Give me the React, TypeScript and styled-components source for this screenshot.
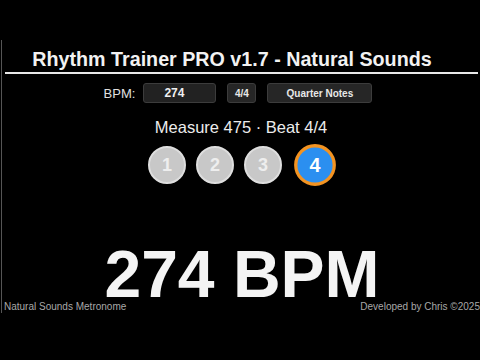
import React from "react";
import styled, { createGlobalStyle } from "styled-components";

const GlobalStyle = createGlobalStyle`
  html, body {
    margin: 0;
    padding: 0;
    background: #000;
    width: 480px;
    height: 360px;
    overflow: hidden;
    font-family: "Liberation Sans", Arial, sans-serif;
  }
`;

const Page = styled.div`
  width: 480px;
  height: 360px;
  padding-top: 40px;
  box-sizing: border-box;
`;

const Frame = styled.div`
  border-left: 1px solid #555;
  margin-left: 1px;
  display: flex;
  flex-direction: column;

  & > * {
    flex-shrink: 0;
  }
`;

const Title = styled.h1`
  margin: 0;
  padding: 8px 18px 0 0;
  font-size: 19.7px;
  font-weight: 700;
  color: #f2f2f2;
  text-align: center;
  line-height: 22px;
`;

const Rule = styled.div`
  margin: 2px 2px 0 3px;
  height: 2px;
  background: #e8e8e8;
`;

const Controls = styled.div`
  display: flex;
  align-items: center;
  justify-content: center;
  padding: 9px 0 0 0;
  margin-left: -6px;
  gap: 11px;
`;

const Label = styled.span`
  font-size: 13px;
  color: #e0e0e0;
  margin-right: -3px;
`;

const Field = styled.div`
  width: 73px;
  height: 20px;
  box-sizing: border-box;
  background: #222;
  border: 1px solid #3c3c3c;
  border-radius: 3px;
  color: #f0f0f0;
  font-size: 12px;
  font-weight: 700;
  display: flex;
  align-items: center;
  padding-left: 20px;
`;

const Button = styled.div<{ $width: number }>`
  width: ${({ $width }) => $width}px;
  height: 20px;
  box-sizing: border-box;
  background: #262626;
  border: 1px solid #3c3c3c;
  border-radius: 3px;
  color: #e8e8e8;
  font-size: 10px;
  font-weight: 700;
  display: flex;
  align-items: center;
  justify-content: center;
`;

const Status = styled.div`
  margin-top: 14px;
  text-align: center;
  font-size: 16.5px;
  color: #ececec;
  line-height: 20px;
`;

const Beats = styled.div`
  display: flex;
  justify-content: center;
  gap: 10px;
  margin-top: 9px;
`;

const Beat = styled.div<{ $active: boolean }>`
  width: 38px;
  height: 38px;
  box-sizing: border-box;
  border-radius: 50%;
  display: flex;
  align-items: center;
  justify-content: center;
  font-size: 18px;
  font-weight: 700;
  color: ${({ $active }) => ($active ? "#fff" : "#eeeeee")};
  background: ${({ $active }) => ($active ? "#2b8ff0" : "#c8c8c8")};
  border: ${({ $active }) => ($active ? "3px solid #f39321" : "2px solid #dedede")};
  transform: ${({ $active }) => ($active ? "scale(1.1)" : "none")};
  margin-left: ${({ $active }) => ($active ? "4px" : "0")};
`;

const Big = styled.div`
  margin-top: 67px;
  text-align: center;
  font-size: 66px;
  font-weight: 700;
  color: #f4f4f4;
  line-height: 46px;
  margin-left: 2px;
`;

const Footer = styled.div`
  display: flex;
  justify-content: space-between;
  font-size: 10px;
  line-height: 12px;
  color: #a8a8a8;
  margin-top: 4px;
  padding-left: 2px;
`;

export default function App() {
  const beats = [1, 2, 3, 4];
  return (
    <>
      <GlobalStyle />
      <Page>
        <Frame>
          <Title>Rhythm Trainer PRO v1.7 - Natural Sounds</Title>
          <Rule />
          <Controls>
            <Label>BPM:</Label>
            <Field>274</Field>
            <Button $width={29}>4/4</Button>
            <Button $width={105}>Quarter Notes</Button>
          </Controls>
          <Status>Measure 475 · Beat 4/4</Status>
          <Beats>
            {beats.map((b) => (
              <Beat key={b} $active={b === 4}>
                {b}
              </Beat>
            ))}
          </Beats>
          <Big>274 BPM</Big>
          <Footer>
            <span>Natural Sounds Metronome</span>
            <span>Developed by Chris ©2025</span>
          </Footer>
        </Frame>
      </Page>
    </>
  );
}
